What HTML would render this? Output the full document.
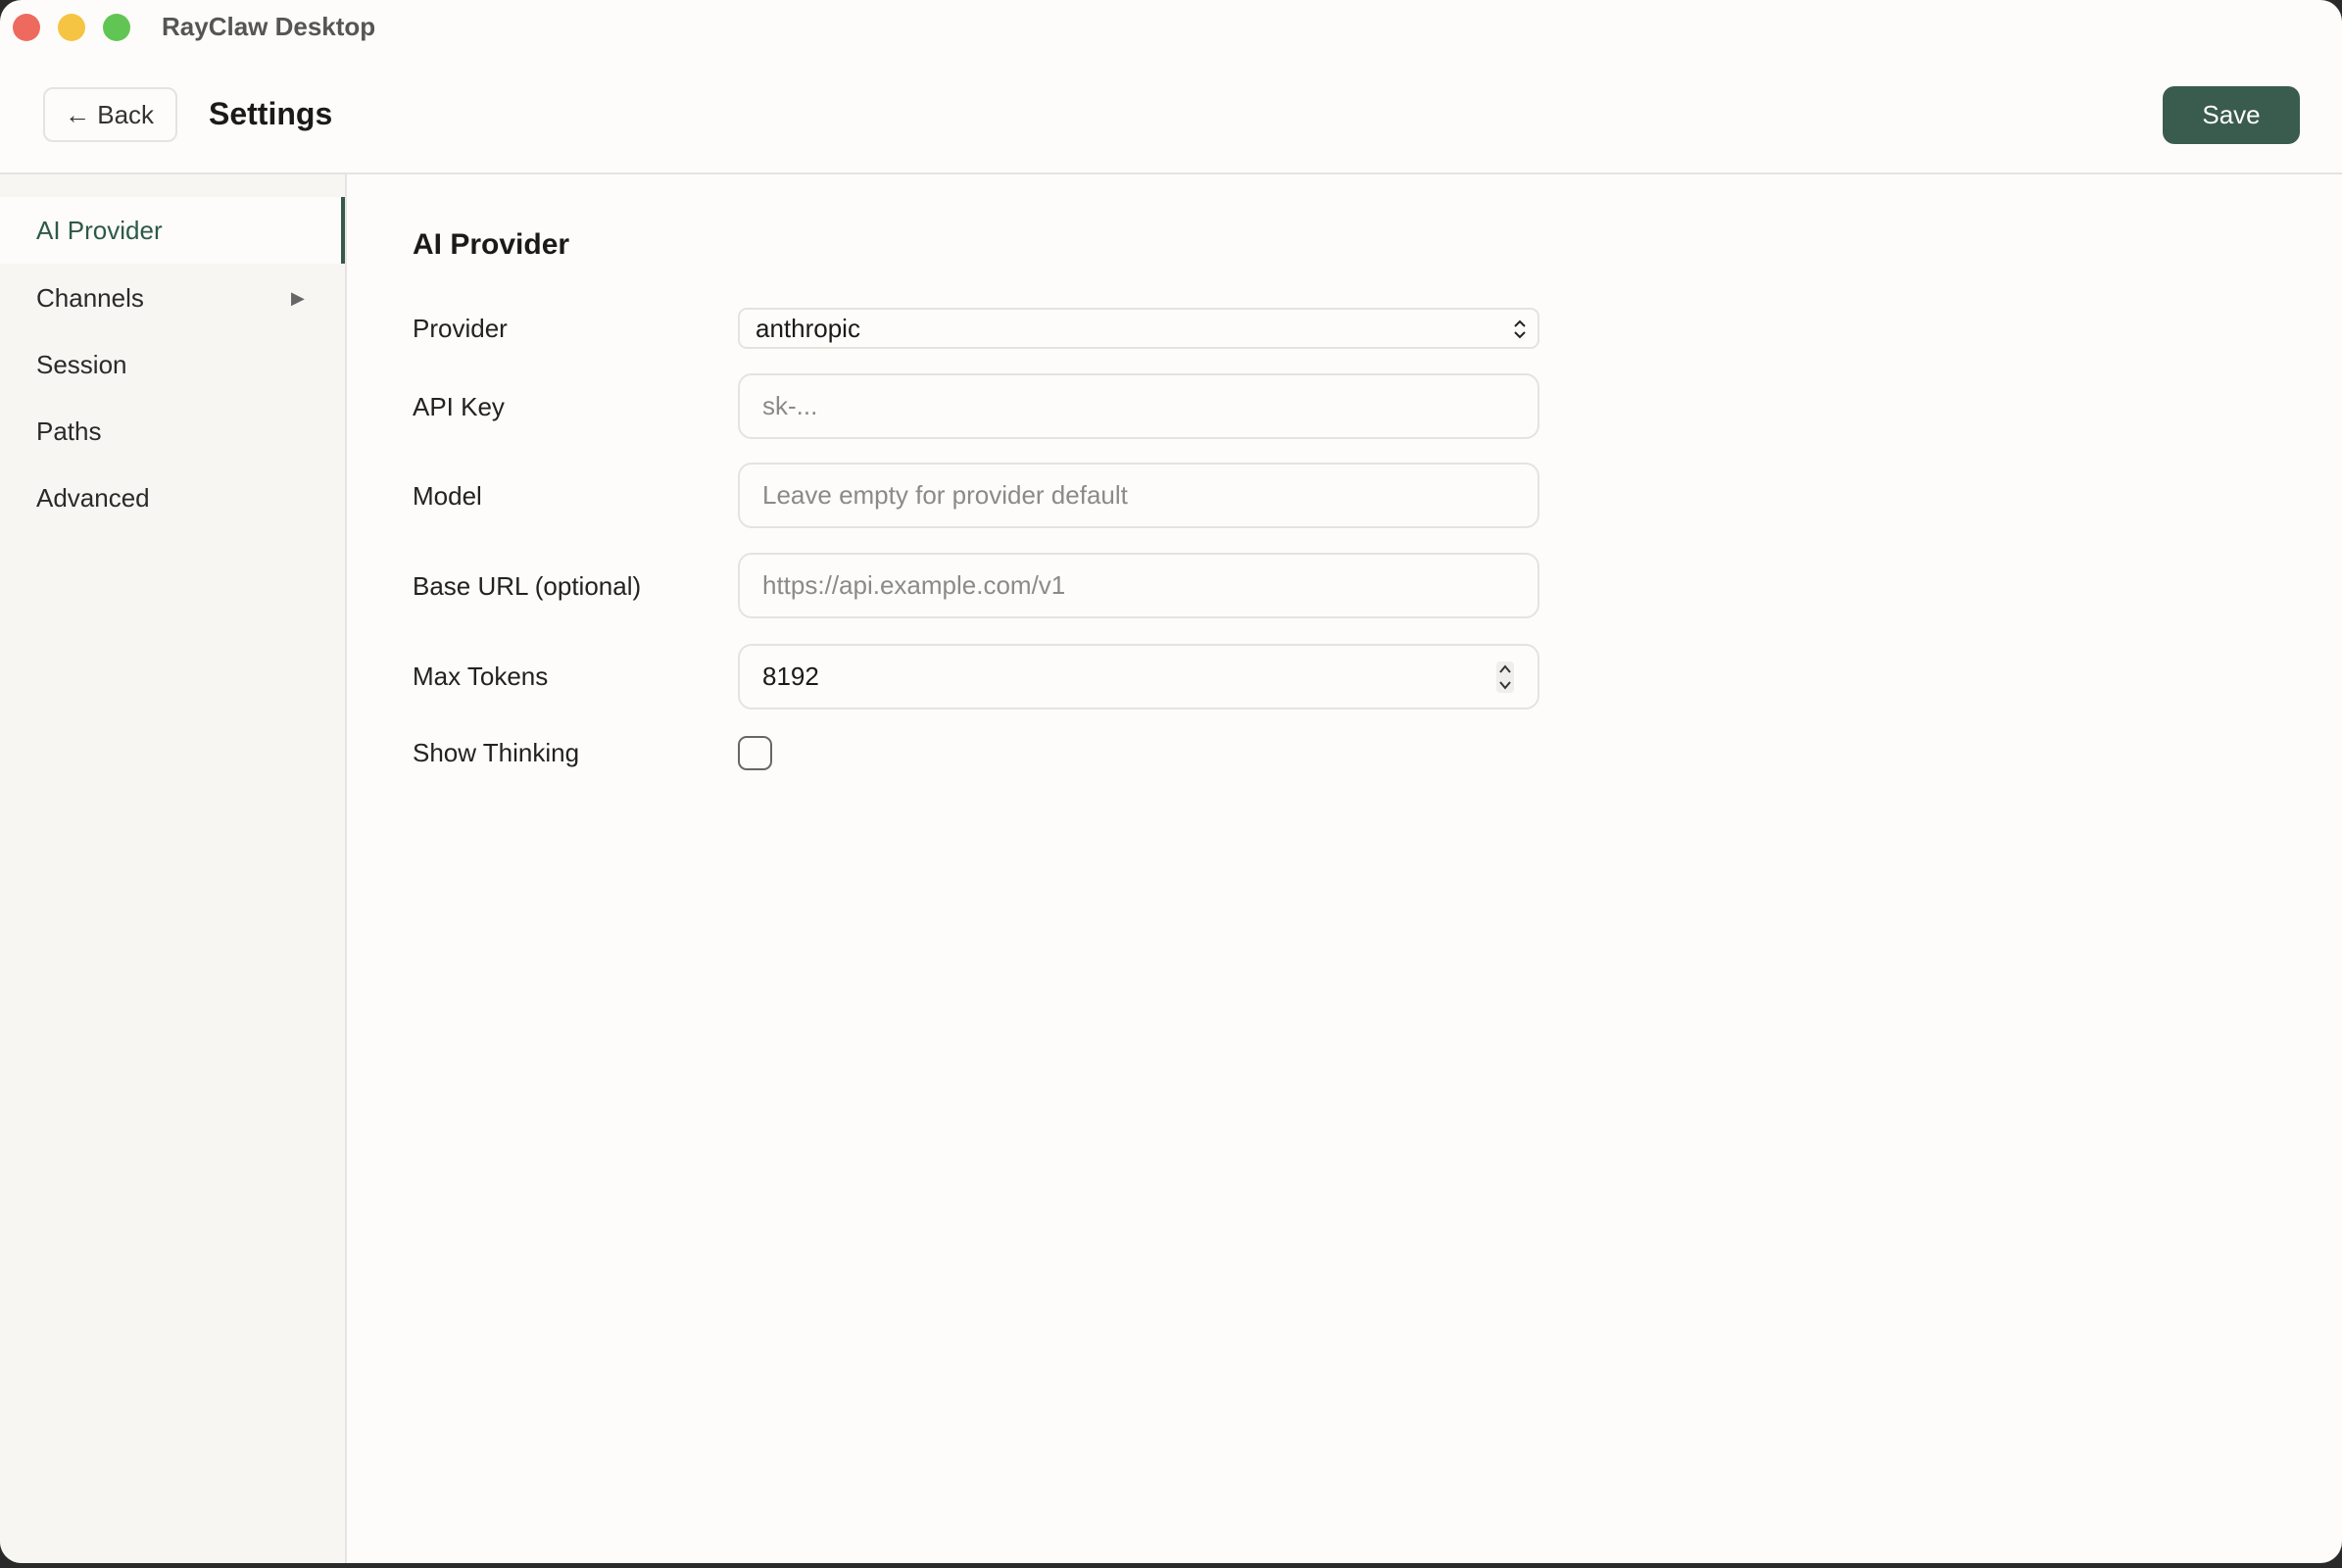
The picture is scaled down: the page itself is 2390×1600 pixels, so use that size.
<!DOCTYPE html>
<html><head><meta charset="utf-8"><style>
*{box-sizing:border-box;margin:0;padding:0}
html,body{width:2390px;height:1600px;overflow:hidden;background:#2a2a2a;font-family:"Liberation Sans",sans-serif}
.win{position:absolute;left:0;top:0;width:2390px;height:1595px;background:#fdfcfa;border-radius:22px;overflow:hidden}
.dot{position:absolute;top:14px;width:28px;height:28px;border-radius:50%}
.t{position:absolute}
.hdrline{position:absolute;left:0;top:176px;width:2390px;height:2px;background:#e5e3df}
.side{position:absolute;left:0;top:178px;width:354px;bottom:0;background:#f7f6f3;border-right:2px solid #e6e4e0}
.item{position:absolute;left:0;width:352px;height:68px;line-height:68px;padding-left:37px;font-size:26px;color:#2a2a2a}
.lbl{position:absolute;left:421px;font-size:26px;color:#222}
.inp{position:absolute;left:753px;width:818px;border:2px solid #e5e3de;border-radius:14px;background:#fdfcfa;font-size:26px;color:#8a8a8a;padding-left:23px}
</style></head><body>
<div class="win">
<div class="dot" style="left:13px;background:#ee6a5f"></div>
<div class="dot" style="left:59px;background:#f5c443"></div>
<div class="dot" style="left:105px;background:#61c554"></div>
<div class="t" style="left:165px;top:12px;font-size:26px;font-weight:bold;color:#555">RayClaw Desktop</div>
<div class="t" style="left:44px;top:89px;width:137px;height:56px;border:2px solid #e5e3df;border-radius:10px;font-size:26px;line-height:52px;color:#333;padding-left:20px">← Back</div>
<div class="t" style="left:213px;top:98px;font-size:32px;font-weight:bold;color:#1a1a1a">Settings</div>
<div class="t" style="left:2207px;top:88px;width:140px;height:59px;background:#3a5c4e;border-radius:12px;color:#fff;font-size:26px;line-height:59px;text-align:center">Save</div>
<div class="hdrline"></div>
<div class="side">
<div class="item" style="top:23px;background:#fdfcfa;color:#2d5a46;border-right:4px solid #35594a">AI Provider</div>
<div class="item" style="top:92px">Channels<span style="position:absolute;left:297px;top:0;font-size:18px;color:#666">▶</span></div>
<div class="item" style="top:160px">Session</div>
<div class="item" style="top:228px">Paths</div>
<div class="item" style="top:296px">Advanced</div>
</div>
<div class="t" style="left:421px;top:233px;font-size:30px;font-weight:bold;color:#1a1a1a">AI Provider</div>
<div class="lbl" style="top:320px">Provider</div>
<div class="lbl" style="top:400px">API Key</div>
<div class="lbl" style="top:491px">Model</div>
<div class="lbl" style="top:583px">Base URL (optional)</div>
<div class="lbl" style="top:675px">Max Tokens</div>
<div class="lbl" style="top:753px">Show Thinking</div>
<div class="inp" style="top:314px;height:42px;line-height:38px;border-radius:9px;color:#1a1a1a;padding-left:16px">anthropic<svg style="position:absolute;right:10px;top:9px" width="16" height="22" viewBox="0 0 16 22"><path d="M3 8 L8 3 L13 8 M3 14 L8 19 L13 14" fill="none" stroke="#222" stroke-width="2"/></svg></div>
<div class="inp" style="top:381px;height:67px;line-height:63px">sk-...</div>
<div class="inp" style="top:472px;height:67px;line-height:63px">Leave empty for provider default</div>
<div class="inp" style="top:564px;height:67px;line-height:63px">https://api.example.com/v1</div>
<div class="inp" style="top:657px;height:67px;line-height:63px;color:#1a1a1a">8192<svg style="position:absolute;right:24px;top:16px" width="18" height="32" viewBox="0 0 18 32"><rect x="0" y="0" width="18" height="32" rx="4" fill="#efeeeb"/><path d="M4 11 L9 5 L14 11 M4 21 L9 27 L14 21" fill="none" stroke="#333" stroke-width="2"/></svg></div>
<div class="t" style="left:753px;top:751px;width:35px;height:35px;border:2.5px solid #666;border-radius:9px"></div>
</div>
</body></html>
